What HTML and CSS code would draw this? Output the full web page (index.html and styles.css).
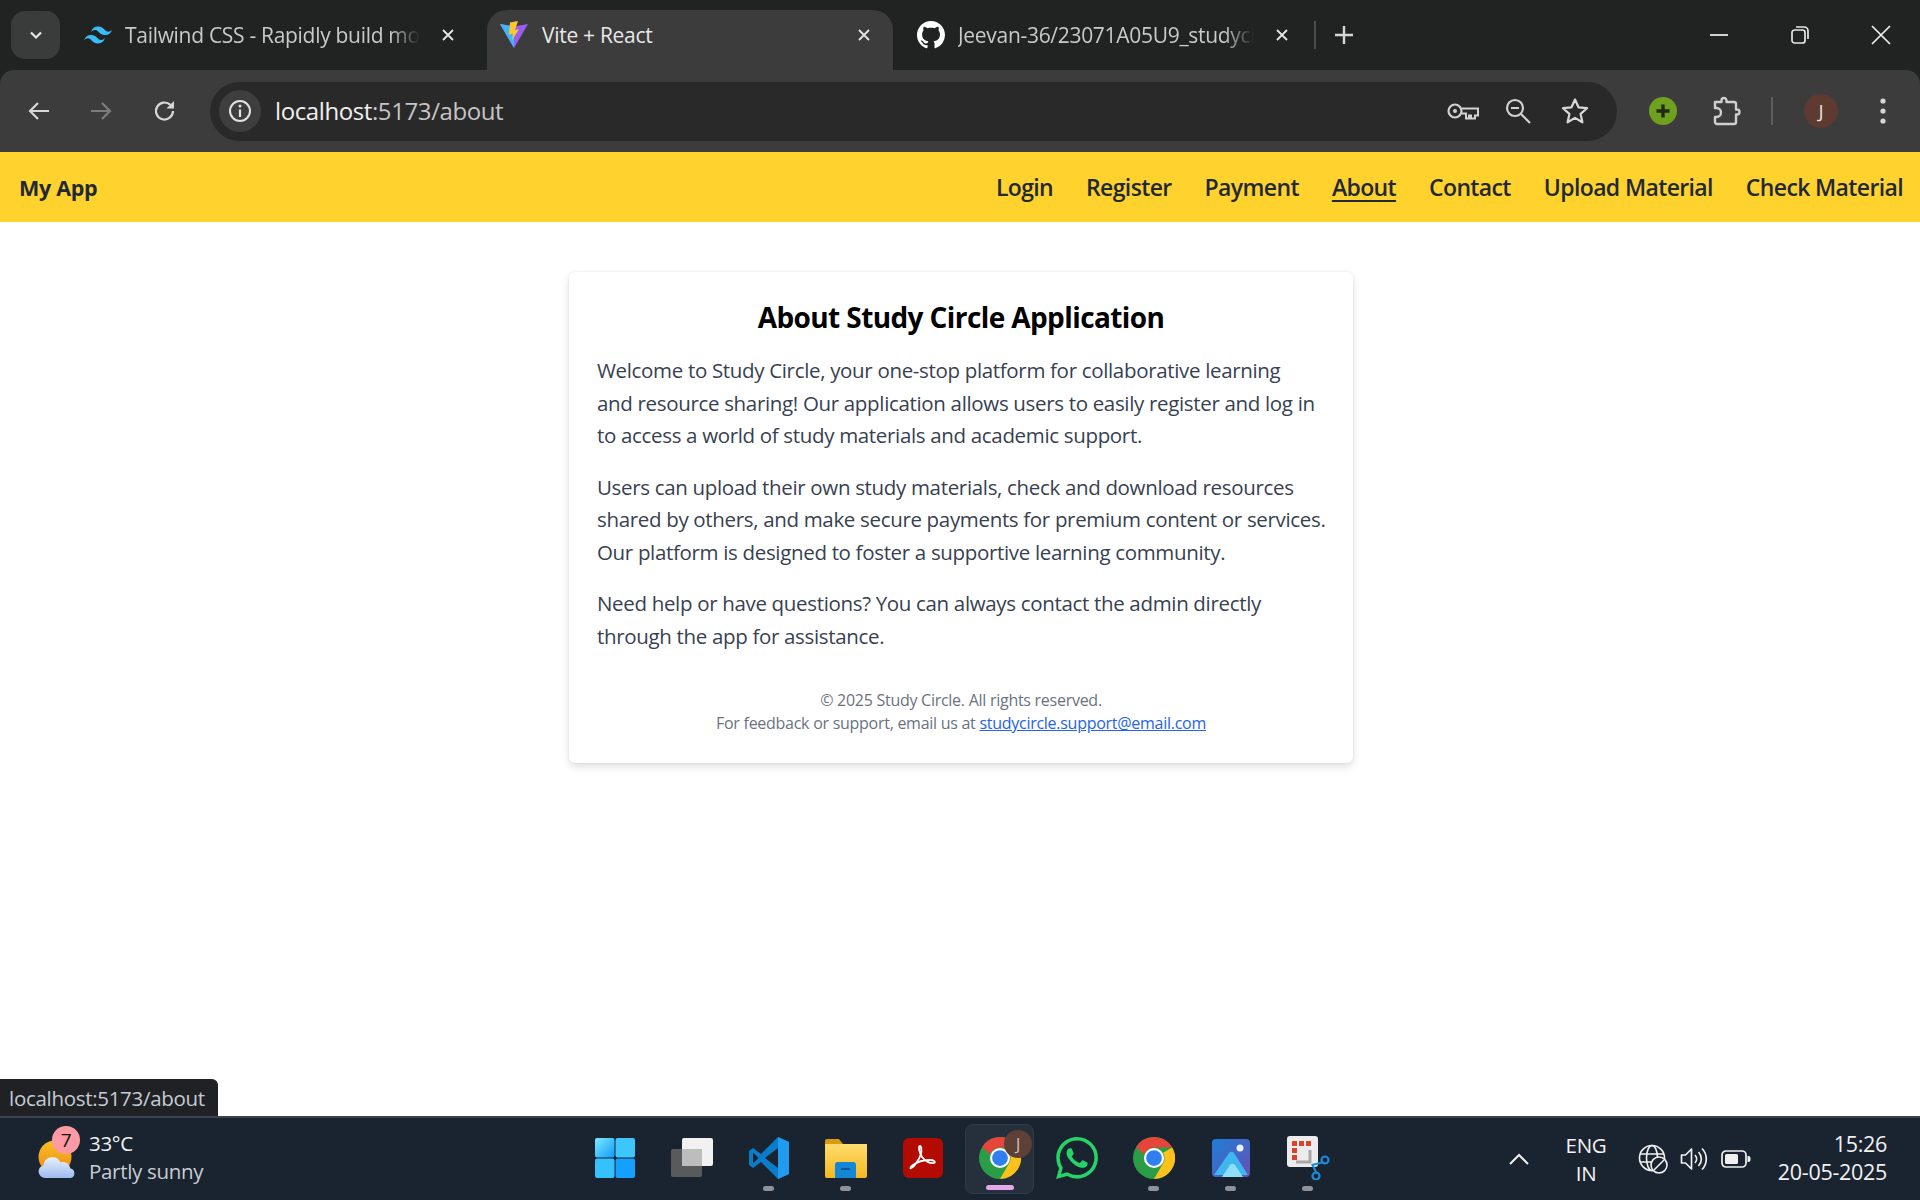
FILE: index.html
```html
<!DOCTYPE html>
<html>
<head>
    <meta charset="UTF-8">
    <title>Vite + React</title>
    <link rel="stylesheet" href="styles.css">
</head>
<body>
    <!-- Iconos reutilizados -->
    <svg class="defs" width="0" height="0">
        <defs>
            <linearGradient id="winBlue" x1="0" y1="0" x2="1" y2="1">
                <stop offset="0" stop-color="#7bebff"/>
                <stop offset="1" stop-color="#0f9bff"/>
            </linearGradient>
            <linearGradient id="sun" x1="0" y1="0" x2="0" y2="1">
                <stop offset="0" stop-color="#f6c026"/>
                <stop offset="1" stop-color="#f08a12"/>
            </linearGradient>
            <linearGradient id="cloud" x1="0" y1="0" x2="0" y2="1">
                <stop offset="0" stop-color="#e8f0fb"/>
                <stop offset="1" stop-color="#9dbcf0"/>
            </linearGradient>
            <linearGradient id="photo" x1="0" y1="0" x2="1" y2="1">
                <stop offset="0" stop-color="#1b7fd6"/>
                <stop offset="1" stop-color="#6a4fb5"/>
            </linearGradient>
            <linearGradient id="folder" x1="0" y1="0" x2="0" y2="1">
                <stop offset="0" stop-color="#ffdc6e"/>
                <stop offset="1" stop-color="#f5b81f"/>
            </linearGradient>
            <symbol id="chrome" viewBox="0 0 48 48">
                <circle cx="24" cy="24" r="24" fill="#2a9d46"/>
                <path d="M24 0a24 24 0 0 1 20.8 12H24a12 12 0 0 0-11.2 7.6L3.6 11.6A24 24 0 0 1 24 0z" fill="#e8453a"/>
                <path d="M44.8 12A24 24 0 0 1 24 48l10.4-18A12 12 0 0 0 34.4 18z" fill="#fcc21b"/>
                <circle cx="24" cy="24" r="11.5" fill="#fff"/>
                <circle cx="24" cy="24" r="9" fill="#2f7ff0"/>
            </symbol>
            <symbol id="close" viewBox="0 0 16 16">
                <path d="M3 3l10 10M13 3L3 13" fill="none" stroke="currentColor" stroke-width="1.8"/>
            </symbol>
        </defs>
    </svg>

    <div class="browser">
        <div class="tabstrip">
            <button class="tabsearch">
                <svg width="16" height="16" viewBox="0 0 16 16"><path d="M3 5.5l5 5 5-5" fill="none" stroke="#e6e6e6" stroke-width="2.2"/></svg>
            </button>
            <div class="tab tab-first">
                <svg class="favicon" width="28" height="28" viewBox="0 0 24 24"><path fill="#38bdf8" d="M12.001,4.8c-3.2,0-5.2,1.6-6,4.8c1.2-1.6,2.6-2.2,4.2-1.8c0.913,0.228,1.565,0.89,2.288,1.624 C13.666,10.618,15.027,12,18.001,12c3.2,0,5.2-1.6,6-4.8c-1.2,1.6-2.6,2.2-4.2,1.8c-0.913-0.228-1.565-0.89-2.288-1.624 C16.337,6.182,14.976,4.8,12.001,4.8z M6.001,12c-3.2,0-5.2,1.6-6,4.8c1.2-1.6,2.6-2.2,4.2-1.8c0.913,0.228,1.565,0.89,2.288,1.624 c1.177,1.194,2.538,2.576,5.512,2.576c3.2,0,5.2-1.6,6-4.8c-1.2,1.6-2.6,2.2-4.2,1.8c-0.913-0.228-1.565-0.89-2.288-1.624 C10.337,13.382,8.976,12,6.001,12z"/></svg>
                <span class="tabtitle">Tailwind CSS - Rapidly build mo</span>
                <svg class="tabclose" width="16" height="16"><use href="#close"/></svg>
            </div>
            <div class="tab tab-active">
                <svg class="favicon" width="30" height="30" viewBox="0 0 30 30">
                    <path d="M1 4l14 2.5L29 4 15 28z" fill="#9b5cf6"/>
                    <path d="M1 4l14 2.5V28z" fill="#41b6f6"/>
                    <path d="M19 1l-8 1.6-1 12 4-.8-1 6.5 7-11-4 .8z" fill="#fdc72e"/>
                </svg>
                <span class="tabtitle">Vite + React</span>
                <svg class="tabclose" width="16" height="16"><use href="#close"/></svg>
            </div>
            <div class="tab tab-third">
                <svg class="favicon" width="28" height="28" viewBox="0 0 16 16"><path fill="#fff" d="M8 0C3.58 0 0 3.58 0 8c0 3.54 2.29 6.53 5.47 7.59.4.07.55-.17.55-.38 0-.19-.01-.82-.01-1.49-2.01.37-2.53-.49-2.69-.94-.09-.23-.48-.94-.82-1.13-.28-.15-.68-.52-.01-.53.63-.01 1.08.58 1.23.82.72 1.21 1.87.87 2.33.66.07-.52.28-.87.51-1.07-1.78-.2-3.64-.89-3.64-3.95 0-.87.31-1.59.82-2.15-.08-.2-.36-1.02.08-2.12 0 0 .67-.21 2.2.82.64-.18 1.32-.27 2-.27s1.36.09 2 .27c1.53-1.04 2.2-.82 2.2-.82.44 1.1.16 1.92.08 2.12.51.56.82 1.27.82 2.15 0 3.07-1.87 3.75-3.65 3.95.29.25.54.73.54 1.48 0 1.07-.01 1.93-.01 2.2 0 .21.15.46.55.38A8.01 8.01 0 0016 8c0-4.42-3.58-8-8-8z"/></svg>
                <span class="tabtitle">Jeevan-36/23071A05U9_studyci</span>
                <svg class="tabclose" width="16" height="16"><use href="#close"/></svg>
            </div>
            <span class="tabsep"></span>
            <svg class="newtab" width="20" height="20" viewBox="0 0 20 20"><path d="M10 1v18M1 10h18" stroke="#d8d8d8" stroke-width="2.4"/></svg>
            <div class="wincontrols">
                <svg width="20" height="20" viewBox="0 0 20 20"><path d="M1 10h18" stroke="#e6e6e6" stroke-width="1.8"/></svg>
                <svg width="20" height="20" viewBox="0 0 20 20"><rect x="2" y="5" width="13" height="13" rx="2.5" fill="none" stroke="#e6e6e6" stroke-width="1.7"/><path d="M6 2h8a4 4 0 0 1 4 4v8" fill="none" stroke="#e6e6e6" stroke-width="1.7"/></svg>
                <svg width="20" height="20" viewBox="0 0 20 20"><path d="M1 1l18 18M19 1L1 19" stroke="#f0f0f0" stroke-width="1.7"/></svg>
            </div>
        </div>

        <div class="toolbar">
            <svg class="tool-back" width="24" height="24" viewBox="0 0 24 24"><path d="M22 12H3M11 4l-8 8 8 8" fill="none" stroke="#d8d8d8" stroke-width="2.2"/></svg>
            <svg class="tool-forward" width="24" height="24" viewBox="0 0 24 24"><path d="M2 12h19M13 4l8 8-8 8" fill="none" stroke="#7d7d7d" stroke-width="2.2"/></svg>
            <svg class="tool-reload" width="24" height="24" viewBox="0 0 24 24"><path d="M20 12a8.5 8.5 0 1 1-2.6-6.1" fill="none" stroke="#d8d8d8" stroke-width="2.2"/><path d="M21 2v7.5h-7.5z" fill="#d8d8d8"/></svg>
            <div class="omnibox">
                <span class="siteinfo">
                    <svg width="24" height="24" viewBox="0 0 24 24"><circle cx="12" cy="12" r="10" fill="none" stroke="#e2e2e2" stroke-width="2"/><path d="M12 10.5V18" stroke="#e2e2e2" stroke-width="2.2"/><circle cx="12" cy="7" r="1.5" fill="#e2e2e2"/></svg>
                </span>
                <span class="url">localhost<span class="urlpath">:5173/about</span></span>
                <svg class="omni-key" width="34" height="22" viewBox="0 0 34 22"><circle cx="9" cy="11" r="6.5" fill="none" stroke="#d2d2d2" stroke-width="2.2"/><circle cx="9" cy="11" r="2" fill="#d2d2d2"/><path d="M15.5 8.5H32v7h-3v3h-4v-3h-2v3h-3v-5h-4" fill="none" stroke="#d2d2d2" stroke-width="2"/></svg>
                <svg class="omni-zoom" width="26" height="26" viewBox="0 0 26 26"><circle cx="10" cy="10" r="8" fill="none" stroke="#d2d2d2" stroke-width="2.2"/><path d="M6 10h8M16 16l9 9" stroke="#d2d2d2" stroke-width="2.2"/></svg>
                <svg class="omni-star" width="28" height="28" viewBox="0 0 28 28"><path d="M14 2.5l3.5 7.8 8.5.9-6.4 5.700 1.800 8.400L14 20.900l-7.400 4.400 1.800-8.400L2 11.200l8.500-.9z" fill="none" stroke="#d8d8d8" stroke-width="2.2" stroke-linejoin="round"/></svg>
            </div>
            <span class="ext-green">
                <svg width="16" height="16" viewBox="0 0 16 16"><path d="M8 1.500v13M1.500 8h13" stroke="#1f2a17" stroke-width="3.400"/></svg>
            </span>
            <svg class="ext-puzzle" width="30" height="30" viewBox="0 0 30 30"><path d="M4 6h6.500V4.500a2.500 2.500 0 0 1 5 0V6H23a2 2 0 0 1 2 2v5.500h1a2.500 2.500 0 0 1 0 5h-1V26a2 2 0 0 1-2 2H6a2 2 0 0 1-2-2v-5h1.500a4.500 4.500 0 0 0 0-9H4z" fill="none" stroke="#cfcfcf" stroke-width="2.400" stroke-linejoin="round"/></svg>
            <span class="toolsep"></span>
            <span class="avatar">J</span>
            <svg class="tool-menu" width="6" height="26" viewBox="0 0 6 26"><circle cx="3" cy="3" r="2.600" fill="#d8d8d8"/><circle cx="3" cy="13" r="2.600" fill="#d8d8d8"/><circle cx="3" cy="23" r="2.600" fill="#d8d8d8"/></svg>
        </div>
    </div>

    <nav class="navbar">
        <div class="brand">My App</div>
        <div class="navlinks">
            <a href="#">Login</a>
            <a href="#">Register</a>
            <a href="#">Payment</a>
            <a href="#" class="current">About</a>
            <a href="#">Contact</a>
            <a href="#">Upload Material</a>
            <a href="#">Check Material</a>
        </div>
    </nav>

    <main class="page">
        <section class="card">
            <h2>About Study Circle Application</h2>
            <p>Welcome to Study Circle, your one-stop platform for collaborative learning<br>and resource sharing! Our application allows users to easily register and log in<br>to access a world of study materials and academic support.</p>
            <p>Users can upload their own study materials, check and download resources<br>shared by others, and make secure payments for premium content or services.<br>Our platform is designed to foster a supportive learning community.</p>
            <p>Need help or have questions? You can always contact the admin directly<br>through the app for assistance.</p>
            <div class="cardfooter">
                © 2025 Study Circle. All rights reserved.<br>
                For feedback or support, email us at <a href="#">studycircle.support@email.com</a>
            </div>
        </section>
        <div class="statusbubble">localhost:5173/about</div>
    </main>

    <footer class="taskbar">
        <div class="weather">
            <span class="weathericon">
                <svg width="44" height="44" viewBox="0 0 44 44">
                    <circle cx="19" cy="20" r="16.500" fill="url(#sun)"/>
                    <path d="M9 41a6.500 6.500 0 0 1-1.500-12.800 9 9 0 0 1 17-3 8 8 0 0 1 10 6.200A5 5 0 0 1 35 41z" fill="url(#cloud)"/>
                </svg>
                <span class="badge">7</span>
            </span>
            <div class="weathertext">
                <div class="temp">33°C</div>
                <div class="cond">Partly sunny</div>
            </div>
        </div>

        <div class="taskicons">
            <div class="taskitem">
                <svg width="42" height="42" viewBox="0 0 42 42">
                    <rect x="1" y="1" width="19.500" height="19.500" rx="2" fill="url(#winBlue)"/>
                    <rect x="21.500" y="1" width="19.500" height="19.500" rx="2" fill="#3dc6fb"/>
                    <rect x="1" y="21.500" width="19.500" height="19.500" rx="2" fill="#35c1fc"/>
                    <rect x="21.500" y="21.500" width="19.500" height="19.500" rx="2" fill="#14a0fe"/>
                </svg>
            </div>
            <div class="taskitem">
                <svg width="44" height="42" viewBox="0 0 44 42">
                    <rect x="12" y="1" width="31" height="28" rx="2" fill="#f1f1f1"/>
                    <rect x="1" y="12" width="31" height="28" rx="2" fill="#5f5f5f" fill-opacity=".93"/>
                    <rect x="12" y="12" width="20" height="17" fill="#bdbdbd"/>
                </svg>
            </div>
            <div class="taskitem running">
                <svg width="42" height="42" viewBox="0 0 42 42">
                    <path d="M30 0l11 5v32l-11 5-17-17L5 31l-4-3v-14l4-3 8 6z" fill="#0b7dc8"/>
                    <path d="M30 0l11 5v32l-11 5z" fill="#1f9cf0"/>
                    <path d="M30 11v20L17 21z" fill="#1a2330"/>
                    <path d="M5 15.500v11l5.500-5.500z" fill="#1a2330"/>
                </svg>
            </div>
            <div class="taskitem running">
                <svg width="44" height="40" viewBox="0 0 44 40">
                    <path d="M1 3a2 2 0 0 1 2-2h12l4 5h-18z" fill="#d99b0b"/>
                    <path d="M1 6h42v32a2 2 0 0 1-2 2H3a2 2 0 0 1-2-2z" fill="url(#folder)"/>
                    <path d="M11 40V27a3 3 0 0 1 3-3h15a3 3 0 0 1 3 3v13z" fill="#1386d6"/>
                    <path d="M17 31h9" stroke="#0b5a96" stroke-width="2"/>
                </svg>
            </div>
            <div class="taskitem">
                <svg width="40" height="40" viewBox="0 0 40 40">
                    <rect width="40" height="40" rx="6" fill="#b30b00"/>
                    <path d="M8 30c3-1 8-8 10-14 1-4 0-8-1-8-2 0-1 6 2 11 3 4 8 7 12 6 2-1 0-3-4-3-6 0-13 2-17 5-3 2-3 4-2 3z" fill="none" stroke="#fff" stroke-width="1.800"/>
                </svg>
            </div>
            <div class="taskitem active">
                <svg width="42" height="42"><use href="#chrome"/></svg>
                <span class="taskavatar">J</span>
            </div>
            <div class="taskitem">
                <svg width="42" height="42" viewBox="0 0 24 24"><path fill="#25d366" d="M17.472 14.382c-.297-.149-1.758-.867-2.03-.967-.273-.099-.471-.148-.67.15-.197.297-.767.966-.94 1.164-.173.199-.347.223-.644.075-.297-.15-1.255-.463-2.39-1.475-.883-.788-1.48-1.761-1.653-2.059-.173-.297-.018-.458.13-.606.134-.133.298-.347.446-.52.149-.174.198-.298.298-.497.099-.198.05-.371-.025-.52-.075-.149-.669-1.612-.916-2.207-.242-.579-.487-.5-.669-.51-.173-.008-.371-.01-.57-.01-.198 0-.52.074-.792.372-.272.297-1.04 1.016-1.04 2.479 0 1.462 1.065 2.875 1.213 3.074.149.198 2.096 3.2 5.077 4.487.709.306 1.262.489 1.694.625.712.227 1.36.195 1.871.118.571-.085 1.758-.719 2.006-1.413.248-.694.248-1.289.173-1.413-.074-.124-.272-.198-.57-.347m-5.421 7.403h-.004a9.87 9.87 0 01-5.031-1.378l-.361-.214-3.741.982.998-3.648-.235-.374a9.86 9.86 0 01-1.51-5.26c.001-5.45 4.436-9.884 9.888-9.884 2.64 0 5.122 1.03 6.988 2.898a9.825 9.825 0 012.893 6.994c-.003 5.45-4.437 9.884-9.885 9.884m8.413-18.297A11.815 11.815 0 0012.05 0C5.495 0 .16 5.335.157 11.892c0 2.096.547 4.142 1.588 5.945L.057 24l6.305-1.654a11.882 11.882 0 005.683 1.448h.005c6.554 0 11.89-5.335 11.893-11.893a11.821 11.821 0 00-3.48-8.413Z"/></svg>
            </div>
            <div class="taskitem running">
                <svg width="42" height="42"><use href="#chrome"/></svg>
            </div>
            <div class="taskitem running">
                <svg width="38" height="38" viewBox="0 0 38 38">
                    <rect width="38" height="38" rx="4" fill="url(#photo)"/>
                    <circle cx="28" cy="9" r="3.500" fill="#e8f2ff"/>
                    <path d="M2 36l15-22a3 3 0 0 1 5 0l14 22z" fill="#3fb7ee"/>
                    <path d="M10 38l8-12a3 3 0 0 1 5 0l8 12z" fill="#8fe0f7"/>
                </svg>
            </div>
            <div class="taskitem running">
                <svg width="44" height="44" viewBox="0 0 44 44">
                    <rect x="1" y="0" width="31" height="31" rx="3" fill="#ececec"/>
                    <rect x="6" y="5" width="5" height="5" fill="#d8442c"/>
                    <rect x="13" y="5" width="5" height="5" fill="#d8442c"/>
                    <rect x="20" y="5" width="5" height="5" fill="#d8442c"/>
                    <rect x="6" y="12" width="5" height="5" fill="#d8442c"/>
                    <rect x="6" y="19" width="5" height="5" fill="#d8442c"/>
                    <path d="M24 14v12H10" fill="none" stroke="#a8a8a8" stroke-width="3"/>
                    <path d="M26 28l5 10M38 26l-12 3" fill="none" stroke="#1b8ad8" stroke-width="2"/>
                    <circle cx="39" cy="24" r="3.500" fill="none" stroke="#1b8ad8" stroke-width="2.200"/>
                    <circle cx="30" cy="40" r="3.500" fill="none" stroke="#1b8ad8" stroke-width="2.200"/>
                </svg>
            </div>
        </div>

        <div class="tray">
            <svg class="tray-chevron" width="20" height="12" viewBox="0 0 20 12"><path d="M1 11l9-9 9 9" fill="none" stroke="#f0f0f0" stroke-width="2"/></svg>
            <div class="lang">ENG<br>IN</div>
            <svg class="tray-globe" width="30" height="30" viewBox="0 0 30 30">
                <g fill="none" stroke="#f0f0f0" stroke-width="1.600">
                    <circle cx="14" cy="14" r="12.500"/>
                    <ellipse cx="14" cy="14" rx="5.500" ry="12.500"/>
                    <path d="M2 10h24M2 18h24"/>
                </g>
                <circle cx="21" cy="21" r="8" fill="#1a2330" stroke="#f0f0f0" stroke-width="1.600"/>
                <path d="M16 26l10-10" stroke="#f0f0f0" stroke-width="1.600"/>
            </svg>
            <svg class="tray-volume" width="30" height="26" viewBox="0 0 30 26"><g fill="none" stroke="#f0f0f0" stroke-width="1.700"><path d="M1.500 9h4l6-6v20l-6-6h-4z" stroke-linejoin="round"/><path d="M15 9a6 6 0 0 1 0 8M18.500 6a10 10 0 0 1 0 14M22 2.500a15 15 0 0 1 0 21"/></g></svg>
            <svg class="tray-battery" width="30" height="18" viewBox="0 0 30 18"><rect x="1" y="1" width="24" height="16" rx="4" fill="none" stroke="#f0f0f0" stroke-width="1.700"/><rect x="4" y="4" width="13" height="10" rx="1.500" fill="#f0f0f0"/><path d="M26.500 6h1a2 2 0 0 1 2 2v2a2 2 0 0 1-2 2h-1z" fill="#f0f0f0"/></svg>
            <div class="clock">15:26<br>20-05-2025</div>
        </div>
    </footer>
</body>
</html>
```

FILE: styles.css
```css
/* Ventana completa: navegador, pagina y barra de tareas */
* {
    box-sizing: border-box;
}

html, body {
    height: 100%;
}

body {
    margin: 0;
    display: flex;
    flex-direction: column;
    overflow: hidden;
    background-color: #fff;
    font-family: "Open Sans", "Noto Sans", Arial, sans-serif;
    font-stretch: 92%;
    letter-spacing: -0.3px;
}

.defs {
    position: absolute;
}

svg {
    display: block;
    flex-shrink: 0;
}

.browser {
    flex-shrink: 0;
    background-color: #212323;
}

/* Pestanas */
.tabstrip {
    height: 70px;
    display: flex;
    align-items: flex-start;
    color: #c9c9c9;
}

.tabsearch {
    width: 49px;
    height: 48px;
    margin: 11px 0 0 11px;
    padding: 0;
    border: none;
    border-radius: 14px;
    background-color: #3a3b3b;
    display: flex;
    align-items: center;
    justify-content: center;
}

.tab {
    height: 60px;
    margin-top: 10px;
    display: flex;
    align-items: center;
    padding-bottom: 10px;
    position: relative;
    font-size: 21px;
}

.tab-first {
    width: 427px;
    padding-left: 24px;
}

.tab-first .tabclose {
    margin-right: 31px;
}

.tab-active {
    width: 406px;
    padding-left: 12px;
    background-color: #3c3c3c;
    border-radius: 20px 20px 0 0;
    color: #e8e8e8;
}

.tab-third {
    width: 418px;
    padding-left: 24px;
}

.favicon {
    margin-right: 13px;
}

.tabtitle {
    flex: 1;
    min-width: 0;
    white-space: nowrap;
    -webkit-mask-image: linear-gradient(to right, #000 90%, transparent 100%);
    mask-image: linear-gradient(to right, #000 90%, transparent 100%);
}

.tab-active .tabtitle {
    -webkit-mask-image: none;
    mask-image: none;
}

.tabclose {
    margin: 0 21px 0 20px;
    color: #e6e6e6;
}

.tabsep {
    width: 2px;
    height: 28px;
    margin-top: 21px;
    margin-left: 3px;
    background-color: #4a4b4b;
}

.newtab {
    margin: 25px 0 0 18px;
}

.wincontrols {
    margin: 25px 29px 0 auto;
    display: flex;
    gap: 61px;
}

/* Barra de herramientas */
.toolbar {
    height: 82px;
    display: flex;
    align-items: center;
    background-color: #3c3c3c;
    border-radius: 14px 14px 0 0;
    padding-left: 27px;
}

.tool-forward {
    margin-left: 38px;
}

.tool-reload {
    margin-left: 40px;
}

.omnibox {
    width: 1407px;
    height: 59px;
    margin-left: 33px;
    display: flex;
    align-items: center;
    background-color: #292929;
    border-radius: 30px;
    padding-left: 9px;
}

.siteinfo {
    width: 42px;
    height: 42px;
    border-radius: 50%;
    background-color: #3e3e3e;
    display: flex;
    align-items: center;
    justify-content: center;
}

.url {
    margin-left: 14px;
    margin-bottom: 2px;
    font-size: 24px;
    letter-spacing: -0.4px;
    color: #f0f0f0;
    flex: 1;
}

.urlpath {
    color: #c4c4c4;
}

.omni-zoom {
    margin-left: 25px;
}

.omni-star {
    margin: 0 28px 0 30px;
}

.ext-green {
    width: 28px;
    height: 28px;
    margin-left: 32px;
    border-radius: 50%;
    background-color: #6fa01e;
    display: flex;
    align-items: center;
    justify-content: center;
}

.ext-puzzle {
    margin-left: 34px;
}

.toolsep {
    width: 2px;
    height: 28px;
    margin-left: 30px;
    background-color: #5d5d5d;
}

.avatar {
    width: 34px;
    height: 34px;
    margin-left: 31px;
    border-radius: 50%;
    background-color: #5e3a30;
    color: #e8e0dc;
    font-size: 19px;
    display: flex;
    align-items: center;
    justify-content: center;
}

.tool-menu {
    margin-left: 42px;
}

/* Navegacion de la aplicacion */
.navbar {
    height: 70px;
    flex-shrink: 0;
    display: flex;
    align-items: center;
    justify-content: space-between;
    padding: 0 17px 0 19px;
    background-color: #ffd22e;
    color: #1f2937;
}

.brand {
    font-size: 21.500px;
    font-weight: 700;
}

.navlinks {
    display: flex;
    gap: 33px;
}

.navlinks a {
    font-size: 23px;
    font-weight: 600;
    letter-spacing: -0.63px;
    color: #1f2937;
    text-decoration: none;
}

.navlinks a.current {
    text-decoration: underline;
    text-underline-offset: 4px;
}

/* Contenido */
.page {
    flex: 1;
    min-height: 0;
    position: relative;
    padding-top: 50px;
}

.card {
    width: 784px;
    height: 491px;
    margin-left: 569px;
    padding: 23px 28px 0;
    background-color: #fff;
    border-radius: 6px;
    box-shadow: 0 4px 8px rgba(0, 0, 0, 0.12), 0 0 3px rgba(0, 0, 0, 0.08);
}

.card h2 {
    margin: 0 0 15px;
    font-size: 28px;
    line-height: 44px;
    font-weight: 700;
    letter-spacing: -0.6px;
    text-align: center;
    color: #000;
}

.card p {
    margin: 0 0 19px;
    font-size: 20.500px;
    line-height: 32.500px;
    letter-spacing: -0.33px;
    color: #374151;
    white-space: nowrap;
}

.cardfooter {
    margin-top: 37px;
    font-size: 16px;
    line-height: 23px;
    letter-spacing: -0.27px;
    text-align: center;
    color: #6b7280;
}

.cardfooter a {
    color: #2563eb;
}

.statusbubble {
    position: absolute;
    left: 0;
    bottom: 0;
    height: 37px;
    padding: 0 13px 0 9px;
    display: flex;
    align-items: center;
    background-color: #202124;
    border-top-right-radius: 6px;
    color: #c5ccd6;
    font-size: 20.500px;
}

/* Barra de tareas */
.taskbar {
    height: 84px;
    flex-shrink: 0;
    display: grid;
    grid-template-columns: 1fr auto 1fr;
    align-items: center;
    background-color: #1a2330;
    border-top: 2px solid #3b4350;
    color: #f2f2f2;
}

.weather {
    display: flex;
    align-items: center;
    padding-left: 36px;
}

.weathericon {
    position: relative;
    width: 53px;
}

.badge {
    position: absolute;
    left: 16px;
    top: -11px;
    width: 28px;
    height: 28px;
    border-radius: 50%;
    background-color: #ff99a4;
    color: #111;
    font-size: 19px;
    display: flex;
    align-items: center;
    justify-content: center;
}

.weathertext {
    margin-top: -4px;
}

.temp,
.cond {
    font-size: 20.500px;
    line-height: 28px;
}

.cond {
    color: #c9cdd3;
}

.taskicons {
    display: flex;
    padding-left: 2px;
}

.taskitem {
    width: 77px;
    height: 70px;
    position: relative;
    display: flex;
    align-items: center;
    justify-content: center;
}

.taskitem > svg {
    margin-top: -2px;
}

.taskitem.running::after,
.taskitem.active::after {
    content: "";
    position: absolute;
    left: 50%;
    bottom: 3px;
    width: 11px;
    height: 5px;
    margin-left: -5.500px;
    border-radius: 3px;
    background-color: #8e939b;
}

.taskitem.active {
    width: 69px;
    margin: 0 4px;
    background-color: #262f3c;
    border: 1px solid #323a47;
    border-radius: 8px;
}

.taskitem.active::after {
    width: 28px;
    margin-left: -14px;
    background-color: #e3a8ea;
}

.taskavatar {
    position: absolute;
    right: 1px;
    top: 5px;
    width: 28px;
    height: 28px;
    border-radius: 50%;
    background-color: #5e4036;
    color: #cfc5bf;
    font-size: 16px;
    display: flex;
    align-items: center;
    justify-content: center;
}

.tray {
    display: flex;
    align-items: center;
    padding-left: 163px;
}

.lang {
    width: 54px;
    margin-left: 30px;
    font-size: 20.500px;
    line-height: 28px;
    text-align: center;
}

.tray-globe {
    margin-left: 25px;
}

.tray-volume {
    margin-left: 12px;
}

.tray-battery {
    margin-left: 11px;
}

.clock {
    margin-left: auto;
    margin-right: 33px;
    margin-top: -2px;
    font-size: 21.500px;
    line-height: 28px;
    text-align: right;
}
```
